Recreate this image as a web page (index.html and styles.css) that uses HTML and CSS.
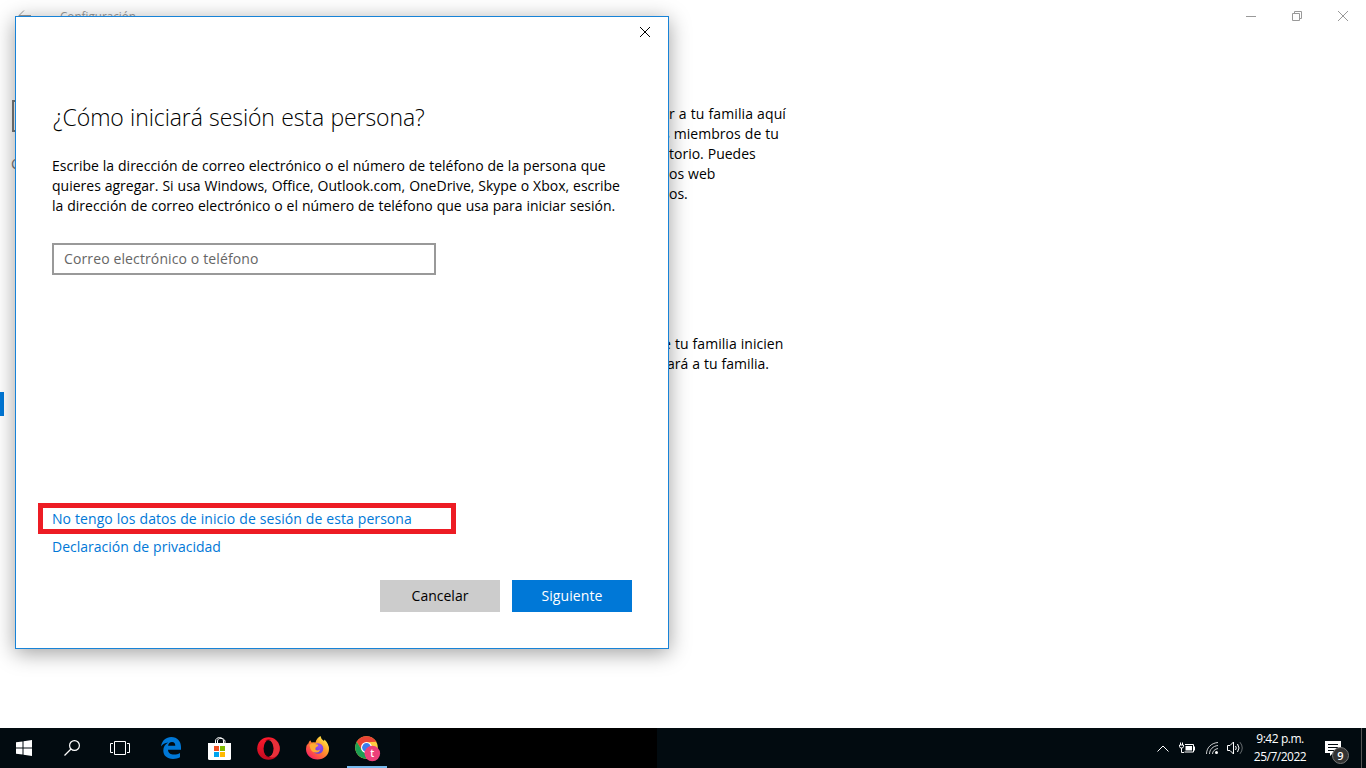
FILE: index.html
```html
<!DOCTYPE html>
<html lang="es">
<head>
    <meta charset="UTF-8">
    <meta name="viewport" content="width=device-width, initial-scale=1.0">
    <title>Configuración</title>
    <link rel="stylesheet" href="styles.css">
</head>
<body>
    <div class="desktop">
        <!-- Settings window -->
        <div class="settings">
            <header class="titlebar">
                <svg class="back" width="14" height="12" viewBox="0 0 14 12"><path d="M13 5.500H1M6 .5L1 5.500l5 5" /></svg>
                <span class="app-name">Configuración</span>
                <div class="window-buttons">
                    <svg width="10" height="10" viewBox="0 0 10 10"><path d="M0 5.500H10" /></svg>
                    <svg width="10" height="10" viewBox="0 0 10 10"><path d="M.5 2.500h7v7h-7zM2.500 2.500v-2h7v7h-2" /></svg>
                    <svg width="10" height="10" viewBox="0 0 10 10"><path d="M0 0L10 10M10 0L0 10" /></svg>
                </div>
            </header>
            <div class="settings-body">
                <nav class="sidebar">
                    <div class="search"></div>
                    <div class="section">C</div>
                    <div class="selected"></div>
                </nav>
                <div class="family">
                    <p>
                        <span class="line l1">er a tu familia aquí</span>
                        <span class="line l2">s miembros de tu</span>
                        <span class="line l3">torio. Puedes</span>
                        <span class="line l4">os web</span>
                        <span class="line l5">os.</span>
                    </p>
                    <p>
                        <span class="line l6">e tu familia inicien</span>
                        <span class="line l7">ará a tu familia.</span>
                    </p>
                </div>
            </div>
        </div>

        <!-- Add user dialog -->
        <div class="dialog">
            <button class="close" aria-label="Cerrar">
                <svg width="10" height="10" viewBox="0 0 10 10"><path d="M0 0L10 10M10 0L0 10" /></svg>
            </button>
            <h1>¿Cómo iniciará sesión esta persona?</h1>
            <p class="intro">
                <span class="line">Escribe la dirección de correo electrónico o el número de teléfono de la persona que</span>
                <span class="line">quieres agregar. Si usa Windows, Office, Outlook.com, OneDrive, Skype o Xbox, escribe</span>
                <span class="line">la dirección de correo electrónico o el número de teléfono que usa para iniciar sesión.</span>
            </p>
            <input type="text" placeholder="Correo electrónico o teléfono">
            <div class="links">
                <a class="highlight" href="#">No tengo los datos de inicio de sesión de esta persona</a>
                <a class="privacy" href="#">Declaración de privacidad</a>
            </div>
            <div class="buttons">
                <button class="cancel">Cancelar</button>
                <button class="next">Siguiente</button>
            </div>
        </div>
    </div>

    <footer class="taskbar">
        <div class="apps">
            <div class="app">
                <svg width="16" height="16" viewBox="0 0 16 16" fill="#fff"><path d="M0 2.300L6.500 1.400V7.500H0zM7.500 1.250L16 0V7.500H7.500zM0 8.500H6.500V14.600L0 13.700zM7.500 8.500H16V16L7.500 14.750z" /></svg>
            </div>
            <div class="app">
                <svg width="16" height="16" viewBox="0 0 16 16" fill="none" stroke="#fff" stroke-width="1.200"><circle cx="10.500" cy="5.500" r="4.900" /><path d="M7 9L.5 15.500" /></svg>
            </div>
            <div class="app">
                <svg width="20" height="14" viewBox="0 0 20 14" fill="none" stroke="#fff"><path d="M4.500 .5h11v13h-11zM3 2.500H.5v9H3M17 2.500h2.500v9H17" /></svg>
            </div>
            <div class="app edge">
                <svg width="20" height="22" viewBox="0 0 20 22"><path fill="#0078d7" d="M0 9.500C1 3.500 5 0 10.300 0C16.500 0 20 4.500 20 10v2.700H7c.2 3.300 2.800 4.900 6 4.900c2.300 0 4.300-.6 6-1.600v4.300c-2 1.100-4.300 1.700-7 1.700C6 22 2.300 18.700 2.300 13.600c0-3.500 1.800-6.400 5-8C4 6 1.500 7.500 0 9.500zM7.100 8.800h7.200c0-2.200-1-3.800-3.300-3.800C8.700 5 7.400 6.700 7.100 8.800z" /></svg>
            </div>
            <div class="app store">
                <svg width="23" height="23" viewBox="0 0 23 23"><path d="M7.500 6V4c0-4.500 8-4.500 8 0v2M9.500 6V4c0-3.500 6.500-3.500 7.500 0v2" fill="none" stroke="#fff" stroke-width="1" /><path fill="#fff" d="M0 6h23v15.500q0 1.500-1.500 1.500h-20Q0 23 0 21.500z" /><path fill="#f25022" d="M6 9h5v5H6z" /><path fill="#7fba00" d="M12 9h5v5h-5z" /><path fill="#00a4ef" d="M6 15h5v5H6z" /><path fill="#ffb900" d="M12 15h5v5h-5z" /></svg>
            </div>
            <div class="app opera">
                <svg width="23" height="23" viewBox="0 0 23 23">
                    <defs><linearGradient id="op" x1="0" y1="0" x2="0" y2="1"><stop offset="0" stop-color="#ff1b2d" /><stop offset="1" stop-color="#c20b20" /></linearGradient></defs>
                    <circle cx="11.500" cy="11.500" r="11.300" fill="url(#op)" />
                    <path fill="#a70014" d="M8 3.800C12 1 17 2.500 18.800 5c4.800 4 4.800 9 0 13c-3 3-7 3-10.800 1.200c5 1 7-3 7-7.700S13 3 8 3.800z" />
                    <path fill="#e8303a" d="M11.500 3.500C15 .8 19 3 21 6c2.300 3.500 2.200 8-.3 11.500c-2.200 3-6 4-9.200 2c3-.2 5-4 5-8s-2-7.600-5-8z" />
                    <ellipse cx="11.500" cy="11.500" rx="4.900" ry="8.300" fill="#020b10" />
                </svg>
            </div>
            <div class="app firefox">
                <svg width="23" height="24" viewBox="0 0 23 24">
                    <defs>
                        <linearGradient id="fx" x1="1" y1="0" x2=".15" y2="1"><stop offset=".1" stop-color="#fff44f" /><stop offset=".42" stop-color="#ffa22a" /><stop offset=".72" stop-color="#ff5940" /><stop offset="1" stop-color="#f5156c" /></linearGradient>
                        <radialGradient id="fg" cx=".6" cy=".3" r=".8"><stop offset="0" stop-color="#a04bee" /><stop offset="1" stop-color="#5b42d9" /></radialGradient>
                    </defs>
                    <path fill="url(#fx)" d="M4.200 4.200L5.500 6.500Q8 6 9.500 6.500Q10.500 2 14.500 0Q15 3.500 18 5L18.500 3.500Q23 8 23 13C23 19 18 23.500 11.500 23.500S0 19 0 13Q0 10 1.500 7.500L1.700 9Q2.500 6 4.200 4.200z" />
                    <circle cx="12" cy="12.500" r="5.300" fill="url(#fg)" />
                    <path fill="#ffac31" d="M3.500 9Q6 6.500 10 8.200Q13 8.400 12 10L9.800 11.500Q8.800 13 9.800 14Q11.500 15 14 13.500Q13.500 16.500 10.500 16.500Q6 17 4.300 12.500z" />
                </svg>
            </div>
            <div class="app chrome active">
                <svg width="26" height="26" viewBox="0 0 26 26">
                    <circle cx="11.500" cy="11.500" r="11.300" fill="#ffcd40" />
                    <path fill="#ea4335" d="M1.700 5.850A11.300 11.300 0 0 1 21.300 5.850L11.500 6.200Q7 7 6.500 14z" />
                    <path fill="#1c9f53" d="M1.700 5.850L6.900 14.200Q9 17.500 14.200 16.100L11 22.800A11.300 11.300 0 0 1 1.700 5.850z" />
                    <circle cx="11.500" cy="11.500" r="5.500" fill="#fff" />
                    <circle cx="11.500" cy="11.500" r="4.400" fill="#3b7ded" />
                    <circle cx="17.300" cy="17.500" r="7.800" fill="#ec407a" />
                    <text x="17.300" y="21" class="avatar">t</text>
                </svg>
            </div>
        </div>
        <div class="task-space"></div>
        <div class="tray">
            <svg class="chevron" width="12" height="7" viewBox="0 0 12 7"><path d="M.5 6.500L6 1l5.500 5.500" /></svg>
            <svg class="battery" width="16" height="12" viewBox="0 0 16 12"><path d="M6 2.500h8.500v7.500h-9M15.500 4.500v4M.5 3h4v1.500q0 1.500-2 1.500t-2-1.500zM1.500 .5v2.500M3.500 .5v2.500M2.500 6v4.500H5" /><path d="M6.500 4h6.500V8.500h-6.500z" fill="#fff" stroke="none" /></svg>
            <svg class="wifi" width="12" height="12" viewBox="0 0 12 12"><path d="M.5 12C.5 6 5 1 12 .5M3.500 12C3.500 7.500 7 4 12 3.500M6.500 12C6.500 9 9 7 12 6.500" opacity=".8" /><circle cx="10.500" cy="10.500" r="1.500" fill="#fff" stroke="none" /></svg>
            <svg class="volume" width="16" height="14" viewBox="0 0 16 14"><path d="M.5 4.500h2.500L6.500 1v12L3 9.500H.5zM8.500 5q1.500 2 0 4M10.500 3q3 4 0 8" /><path d="M13 1.200q4.500 5.800 0 11.600" opacity=".4" /></svg>
            <div class="clock">
                <span class="time">9:42 p.m.</span>
                <span class="date">25/7/2022</span>
            </div>
            <div class="notifications">
                <svg width="16" height="15" viewBox="0 0 16 15"><path fill="#fff" d="M0 0h16v12H8L5 15v-3H0z" /><path stroke="#020b10" d="M3 3.500h10M3 6.500h10M3 9.500h6" /></svg>
                <span class="count">9</span>
            </div>
            <div class="show-desktop"></div>
        </div>
    </footer>
</body>
</html>
```
FILE: styles.css
```css
body {
    margin: 0;
    height: 768px;
    display: flex;
    flex-direction: column;
    overflow: hidden;
    background: #fff;
    color: #000;
    font-family: "Open Sans", "Noto Sans", sans-serif;
    font-size: 14px;
    line-height: 20px;
    word-spacing: 0.3px;
}
.desktop {
    position: relative;
    flex: 1;
    overflow: hidden;
}
.line {
    display: block;
    white-space: nowrap;
}
svg {
    display: block;
    flex: none;
}

/* settings window */
.titlebar {
    display: flex;
    align-items: center;
    height: 32px;
    padding: 0 18px;
    color: #999;
}
.titlebar svg {
    fill: none;
    stroke: #999;
}
.app-name {
    margin-left: 28px;
    font-size: 11.7px;
}
.window-buttons {
    display: flex;
    gap: 36px;
    margin-left: auto;
}
.settings-body {
    display: flex;
}
.sidebar {
    width: 320px;
    padding-top: 68px;
}
.search {
    width: 292px;
    height: 28px;
    margin-left: 12px;
    border: 2px solid #7a7a7a;
}
.section {
    margin: 22px 0 0 11px;
    color: #767676;
}
.selected {
    width: 4px;
    height: 24px;
    margin-top: 218px;
    background: #0078d7;
}
.family {
    margin-left: 340px;
    padding-top: 72px;
}
.family p {
    margin: 0 0 130px;
}
.l1 {
    padding-left: 1px;
    letter-spacing: 0.1px;
}
.l2 {
    padding-left: 3px;
    letter-spacing: 0.05px;
}
.l3,
.l4,
.l5 {
    padding-left: 9px;
}
.l6 {
    padding-left: 3px;
    letter-spacing: 0.05px;
}
.l7 {
    padding-left: 7px;
}

/* dialog */
.dialog {
    position: absolute;
    left: 15px;
    top: 16px;
    box-sizing: border-box;
    width: 654px;
    height: 633px;
    padding: 10px 36px 36px;
    display: flex;
    flex-direction: column;
    border: 1px solid #1883d7;
    background: #fff;
    box-shadow: 0 4px 20px rgba(0, 0, 0, 0.38);
}
.close {
    align-self: flex-end;
    margin-right: -18px;
    padding: 0;
    border: none;
    background: none;
}
.close svg {
    stroke: #000;
}
h1 {
    margin: 63px 0 0 1px;
    font-size: 23px;
    font-weight: 300;
    line-height: 34px;
    letter-spacing: -0.1px;
    word-spacing: 0.5px;
    white-space: nowrap;
}
.intro {
    margin: 22px 0 27px;
}
input {
    box-sizing: border-box;
    width: 384px;
    height: 32px;
    padding: 0 10px 2px;
    border: 2px solid #999;
    font: inherit;
    letter-spacing: 0.12px;
}
input::placeholder {
    color: #666;
}
.links {
    display: flex;
    flex-direction: column;
    align-items: flex-start;
    margin-top: auto;
}
.links a {
    color: #0078d7;
    text-decoration: none;
    white-space: nowrap;
}
.links .highlight {
    box-sizing: border-box;
    width: 418px;
    height: 31px;
    margin-left: -14px;
    padding: 1px 0 0 9px;
    border: 5px solid #ed1c24;
    letter-spacing: 0.05px;
}
.privacy {
    margin-top: 3px;
}
.buttons {
    display: flex;
    justify-content: flex-end;
    gap: 12px;
    margin-top: 23px;
}
.buttons button {
    width: 120px;
    height: 32px;
    padding: 0;
    border: none;
    background: #ccc;
    font: inherit;
}
.buttons .next {
    background: #0078d7;
    color: #fff;
    letter-spacing: 0.1px;
}

/* taskbar */
.taskbar {
    display: flex;
    height: 40px;
    background: #020b10;
    color: #fff;
}
.apps {
    display: flex;
    width: 400px;
}
.app {
    display: flex;
    align-items: center;
    justify-content: center;
    width: 48px;
}
.edge {
    margin-left: 3px;
}
.opera,
.firefox {
    margin-left: 1px;
}
.active {
    box-sizing: border-box;
    width: 40px;
    margin-left: 6px;
    padding: 4px 0 0 2px;
    border-bottom: 2px solid #76b9ed;
}
.avatar {
    fill: #fff;
    font-size: 10px;
    font-weight: 600;
    text-anchor: middle;
}
.task-space {
    width: 257px;
    background: #000;
}
.tray {
    display: flex;
    align-items: center;
    margin-left: auto;
}
.tray > svg {
    fill: none;
    stroke: #fff;
}
.battery {
    margin-left: 10px;
}
.wifi {
    margin-left: 11px;
}
.volume {
    margin-left: 9px;
}
.clock {
    display: flex;
    flex-direction: column;
    align-items: center;
    width: 54px;
    margin-left: 10px;
    font-size: 12px;
    line-height: 18px;
    letter-spacing: -0.5px;
    white-space: nowrap;
}
.notifications {
    position: relative;
    margin-left: 18px;
}
.count {
    position: absolute;
    left: 7px;
    top: 6px;
    width: 15px;
    height: 15px;
    border: 1px solid #777;
    border-radius: 50%;
    background: #333;
    font-size: 11px;
    font-weight: 600;
    line-height: 15px;
    text-align: center;
}
.show-desktop {
    height: 40px;
    margin-left: 20px;
    width: 4px;
    border-left: 1px solid #555;
}
```
